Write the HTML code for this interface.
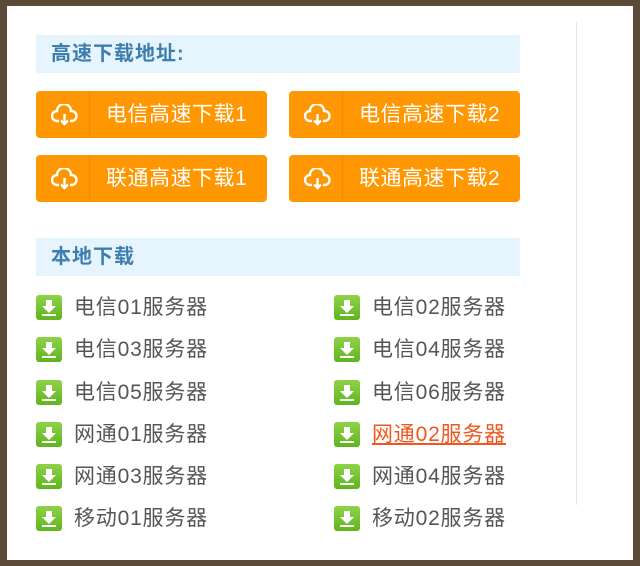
<!DOCTYPE html>
<html><head><meta charset="utf-8"><style>
body{margin:0;width:640px;height:566px;background:#5b4a38;position:relative;overflow:hidden;font-family:"Liberation Sans","Noto Sans CJK SC",sans-serif}
.page{position:absolute;left:7px;top:6px;width:626px;height:554px;background:#fff}
.vl{position:absolute;left:576px;top:22px;width:1px;height:483px;background:#e8e8e8}
.hd{position:absolute;left:36px;width:484px;height:38px;background:#e6f4fd;color:#3d7eae;font-weight:bold;font-size:20px;letter-spacing:1px;line-height:38px;box-sizing:border-box;padding-left:15px}
.btn{position:absolute;width:231px;height:47px;background:#fe9702;border-radius:4px;color:#fff;font-size:21px;letter-spacing:0.5px;line-height:47px}
.btn .d{position:absolute;left:53px;top:0;width:1px;height:47px;background:#f08a00}
.btn svg{position:absolute;left:15px;top:13px}
.btn span{position:absolute;left:70px}
.it{position:absolute;height:26px;font-size:21px;letter-spacing:0.8px;color:#555;line-height:26px}
.it .ic{position:absolute;left:0;top:0;width:26px;height:25px;background:linear-gradient(#8fd24a,#5fb51e);border-radius:3px}
.it .ic svg{position:absolute;left:0;top:0}
.it span{position:absolute;left:38px;white-space:nowrap}
.red span{color:#f0561e;text-decoration:underline}
</style></head><body><div class="page"></div><div class="vl"></div>
<div class="hd" style="top:35px">高速下载地址:</div>
<div class="btn" style="left:36px;top:91px"><svg width="28" height="22" viewBox="0 0 28 22" fill="none" stroke="#fff" stroke-width="2.4"><path d="M8 17H6a5 5 0 0 1 0-10 7 7 0 0 1 14 0 4.5 4.5 0 0 1 1 10h-2"/><path d="M13.5 10v10M10 16.5l3.5 3.5 3.5-3.5"/></svg><div class="d"></div><span>电信高速下载1</span></div>
<div class="btn" style="left:289px;top:91px"><svg width="28" height="22" viewBox="0 0 28 22" fill="none" stroke="#fff" stroke-width="2.4"><path d="M8 17H6a5 5 0 0 1 0-10 7 7 0 0 1 14 0 4.5 4.5 0 0 1 1 10h-2"/><path d="M13.5 10v10M10 16.5l3.5 3.5 3.5-3.5"/></svg><div class="d"></div><span>电信高速下载2</span></div>
<div class="btn" style="left:36px;top:155px"><svg width="28" height="22" viewBox="0 0 28 22" fill="none" stroke="#fff" stroke-width="2.4"><path d="M8 17H6a5 5 0 0 1 0-10 7 7 0 0 1 14 0 4.5 4.5 0 0 1 1 10h-2"/><path d="M13.5 10v10M10 16.5l3.5 3.5 3.5-3.5"/></svg><div class="d"></div><span>联通高速下载1</span></div>
<div class="btn" style="left:289px;top:155px"><svg width="28" height="22" viewBox="0 0 28 22" fill="none" stroke="#fff" stroke-width="2.4"><path d="M8 17H6a5 5 0 0 1 0-10 7 7 0 0 1 14 0 4.5 4.5 0 0 1 1 10h-2"/><path d="M13.5 10v10M10 16.5l3.5 3.5 3.5-3.5"/></svg><div class="d"></div><span>联通高速下载2</span></div>
<div class="hd" style="top:238px">本地下载</div>
<div class="it" style="left:36px;top:295px"><div class="ic"><svg width="26" height="25" viewBox="0 0 26 25"><path d="M10 5h6v6h4l-7 7-7-7h4z" fill="#fff"/><rect x="6" y="19" width="14" height="2" fill="#fff"/></svg></div><span>电信01服务器</span></div>
<div class="it" style="left:334px;top:295px"><div class="ic"><svg width="26" height="25" viewBox="0 0 26 25"><path d="M10 5h6v6h4l-7 7-7-7h4z" fill="#fff"/><rect x="6" y="19" width="14" height="2" fill="#fff"/></svg></div><span>电信02服务器</span></div>
<div class="it" style="left:36px;top:337px"><div class="ic"><svg width="26" height="25" viewBox="0 0 26 25"><path d="M10 5h6v6h4l-7 7-7-7h4z" fill="#fff"/><rect x="6" y="19" width="14" height="2" fill="#fff"/></svg></div><span>电信03服务器</span></div>
<div class="it" style="left:334px;top:337px"><div class="ic"><svg width="26" height="25" viewBox="0 0 26 25"><path d="M10 5h6v6h4l-7 7-7-7h4z" fill="#fff"/><rect x="6" y="19" width="14" height="2" fill="#fff"/></svg></div><span>电信04服务器</span></div>
<div class="it" style="left:36px;top:380px"><div class="ic"><svg width="26" height="25" viewBox="0 0 26 25"><path d="M10 5h6v6h4l-7 7-7-7h4z" fill="#fff"/><rect x="6" y="19" width="14" height="2" fill="#fff"/></svg></div><span>电信05服务器</span></div>
<div class="it" style="left:334px;top:380px"><div class="ic"><svg width="26" height="25" viewBox="0 0 26 25"><path d="M10 5h6v6h4l-7 7-7-7h4z" fill="#fff"/><rect x="6" y="19" width="14" height="2" fill="#fff"/></svg></div><span>电信06服务器</span></div>
<div class="it" style="left:36px;top:422px"><div class="ic"><svg width="26" height="25" viewBox="0 0 26 25"><path d="M10 5h6v6h4l-7 7-7-7h4z" fill="#fff"/><rect x="6" y="19" width="14" height="2" fill="#fff"/></svg></div><span>网通01服务器</span></div>
<div class="it red" style="left:334px;top:422px"><div class="ic"><svg width="26" height="25" viewBox="0 0 26 25"><path d="M10 5h6v6h4l-7 7-7-7h4z" fill="#fff"/><rect x="6" y="19" width="14" height="2" fill="#fff"/></svg></div><span>网通02服务器</span></div>
<div class="it" style="left:36px;top:464px"><div class="ic"><svg width="26" height="25" viewBox="0 0 26 25"><path d="M10 5h6v6h4l-7 7-7-7h4z" fill="#fff"/><rect x="6" y="19" width="14" height="2" fill="#fff"/></svg></div><span>网通03服务器</span></div>
<div class="it" style="left:334px;top:464px"><div class="ic"><svg width="26" height="25" viewBox="0 0 26 25"><path d="M10 5h6v6h4l-7 7-7-7h4z" fill="#fff"/><rect x="6" y="19" width="14" height="2" fill="#fff"/></svg></div><span>网通04服务器</span></div>
<div class="it" style="left:36px;top:506px"><div class="ic"><svg width="26" height="25" viewBox="0 0 26 25"><path d="M10 5h6v6h4l-7 7-7-7h4z" fill="#fff"/><rect x="6" y="19" width="14" height="2" fill="#fff"/></svg></div><span>移动01服务器</span></div>
<div class="it" style="left:334px;top:506px"><div class="ic"><svg width="26" height="25" viewBox="0 0 26 25"><path d="M10 5h6v6h4l-7 7-7-7h4z" fill="#fff"/><rect x="6" y="19" width="14" height="2" fill="#fff"/></svg></div><span>移动02服务器</span></div>
</body></html>
